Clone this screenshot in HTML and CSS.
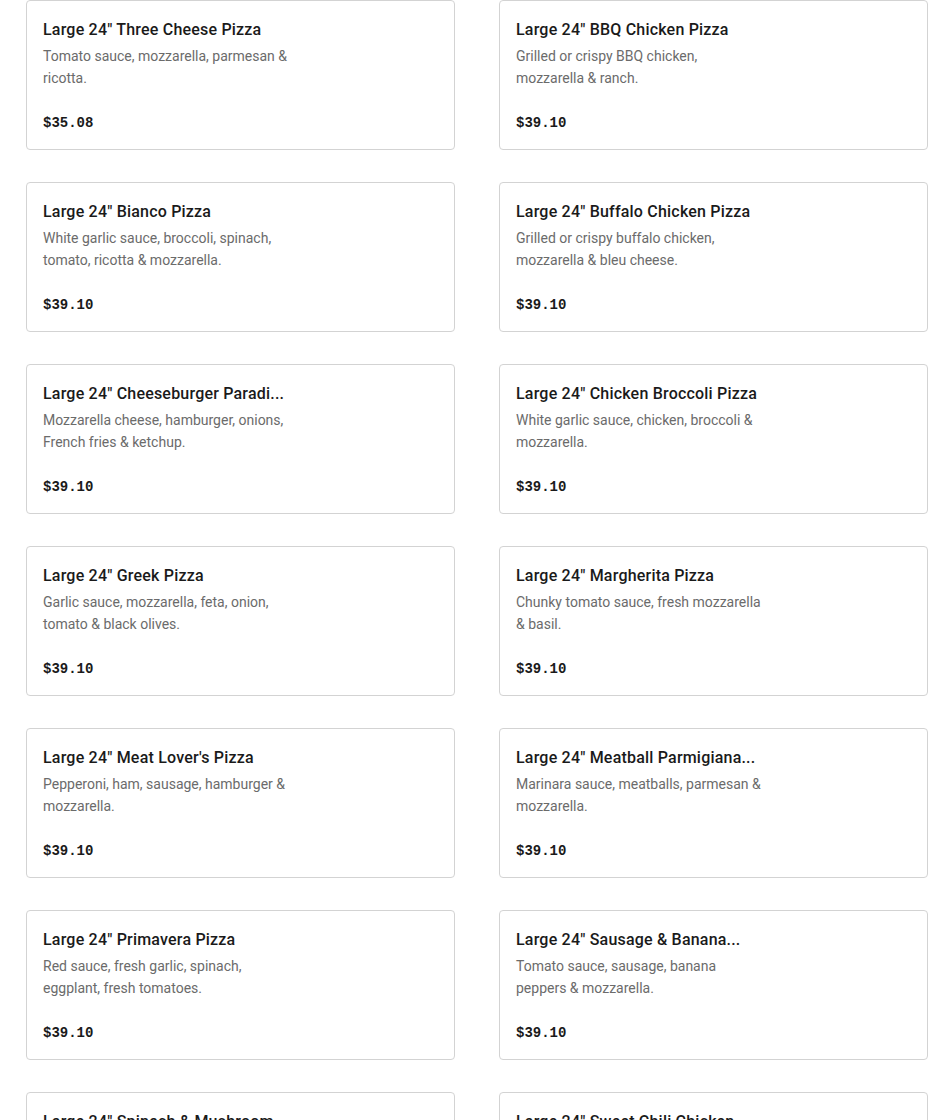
FILE: index.html
```html
<!DOCTYPE html>
<html>
<head>
<meta charset="utf-8">
<link rel="stylesheet" href="styles.css">
</head>
<body>
<div class="menu">
  <div class="card"><div class="info"><div class="title">Large 24" Three Cheese Pizza</div><div class="desc">Tomato sauce, mozzarella, parmesan &amp; ricotta.</div><div class="price">$35.08</div></div></div>
  <div class="card"><div class="info"><div class="title">Large 24" BBQ Chicken Pizza</div><div class="desc">Grilled or crispy BBQ chicken, mozzarella &amp; ranch.</div><div class="price">$39.10</div></div></div>
  <div class="card"><div class="info"><div class="title">Large 24" Bianco Pizza</div><div class="desc">White garlic sauce, broccoli, spinach, tomato, ricotta &amp; mozzarella.</div><div class="price">$39.10</div></div></div>
  <div class="card"><div class="info"><div class="title">Large 24" Buffalo Chicken Pizza</div><div class="desc">Grilled or crispy buffalo chicken, mozzarella &amp; bleu cheese.</div><div class="price">$39.10</div></div></div>
  <div class="card"><div class="info"><div class="title">Large 24" Cheeseburger Paradi...</div><div class="desc">Mozzarella cheese, hamburger, onions, French fries &amp; ketchup.</div><div class="price">$39.10</div></div></div>
  <div class="card"><div class="info"><div class="title">Large 24" Chicken Broccoli Pizza</div><div class="desc">White garlic sauce, chicken, broccoli &amp; mozzarella.</div><div class="price">$39.10</div></div></div>
  <div class="card"><div class="info"><div class="title">Large 24" Greek Pizza</div><div class="desc">Garlic sauce, mozzarella, feta, onion, tomato &amp; black olives.</div><div class="price">$39.10</div></div></div>
  <div class="card"><div class="info"><div class="title">Large 24" Margherita Pizza</div><div class="desc">Chunky tomato sauce, fresh mozzarella &amp; basil.</div><div class="price">$39.10</div></div></div>
  <div class="card"><div class="info"><div class="title">Large 24" Meat Lover's Pizza</div><div class="desc">Pepperoni, ham, sausage, hamburger &amp; mozzarella.</div><div class="price">$39.10</div></div></div>
  <div class="card"><div class="info"><div class="title">Large 24" Meatball Parmigiana...</div><div class="desc">Marinara sauce, meatballs, parmesan &amp; mozzarella.</div><div class="price">$39.10</div></div></div>
  <div class="card"><div class="info"><div class="title">Large 24" Primavera Pizza</div><div class="desc">Red sauce, fresh garlic, spinach, eggplant, fresh tomatoes.</div><div class="price">$39.10</div></div></div>
  <div class="card"><div class="info"><div class="title">Large 24" Sausage &amp; Banana...</div><div class="desc">Tomato sauce, sausage, banana peppers &amp; mozzarella.</div><div class="price">$39.10</div></div></div>
  <div class="card"><div class="info"><div class="title">Large 24" Spinach &amp; Mushroom</div><div class="desc">Spinach, mushrooms, garlic &amp; mozzarella.</div><div class="price">$39.10</div></div></div>
  <div class="card"><div class="info"><div class="title">Large 24" Sweet Chili Chicken</div><div class="desc">Sweet chili sauce, chicken &amp; mozzarella.</div><div class="price">$39.10</div></div></div>
</div>
</body>
</html>
```

FILE: styles.css
```css
html, body {
  margin: 0;
  padding: 0;
  background: #ffffff;
}
body {
  font-family: "Roboto", "Liberation Sans", sans-serif;
  color: #1a1a1a;
}
.menu {
  display: grid;
  grid-template-columns: 429px 429px;
  column-gap: 44px;
  row-gap: 32px;
  padding-left: 26px;
}
.card {
  box-sizing: border-box;
  height: 150px;
  border: 1px solid #d3d3d3;
  border-radius: 4px;
  padding: 16px;
}
.info {
  width: 252px;
}
.title {
  font-size: 16px;
  font-weight: 500;
  letter-spacing: 0.2px;
  line-height: 24px;
  padding-top: 1px;
  margin-bottom: 3px;
  white-space: nowrap;
}
.desc {
  font-size: 14px;
  line-height: 22px;
  color: #6b6b6b;
  height: 44px;
  margin-bottom: 22px;
}
.price {
  font-family: "Liberation Mono", "DejaVu Sans Mono", monospace;
  font-weight: 700;
  font-size: 14px;
  line-height: 22px;
  padding-top: 1px;
  color: #1a1a1a;
}
```
